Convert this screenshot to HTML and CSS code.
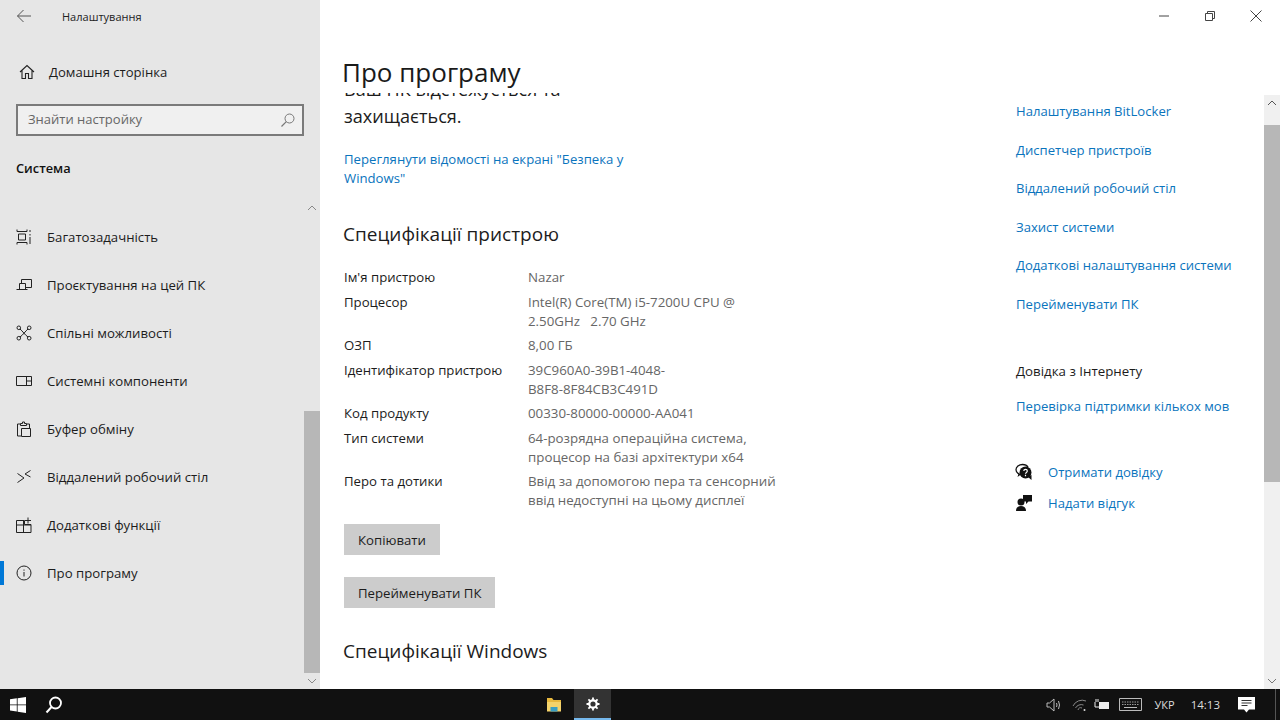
FILE: index.html
```html
<!DOCTYPE html>
<html lang="uk">
  <head>
    <meta charset="utf-8">
    <title>Про програму</title>
    <link rel="stylesheet" href="styles.css">
  </head>
  <body>
    <div class="window">
      <aside class="sidebar">
        <div class="app-bar">
          <svg class="back-icon" width="16" height="16" viewBox="0 0 16 16"><path d="M15 8H1.500M7.500 2L1.500 8l6 6" fill="none" stroke="#555" stroke-width="1"/></svg>
          <span class="app-title">Налаштування</span>
        </div>
        <div class="home-row">
          <svg class="nav-icon" width="16" height="16" viewBox="0 0 16 16"><path d="M1 8l7-6.500L15 8M3 6.500V14.500h3.500V9.500h3V14.500H13V6.500" fill="none" stroke="#222" stroke-width="1.100"/></svg>
          <span>Домашня сторінка</span>
        </div>
        <div class="search-box">
          <span>Знайти настройку</span>
          <svg width="16" height="16" viewBox="0 0 16 16"><circle cx="9.500" cy="6.500" r="4.500" fill="none" stroke="#777"/><path d="M6.300 9.700L1.500 14.500" stroke="#777" stroke-width="1.200"/></svg>
        </div>
        <div class="group-title">Система</div>
        <nav class="nav-list">
          <div class="nav-item">
            <svg class="nav-icon" width="16" height="16" viewBox="0 0 16 16"><path d="M1 .5v2h10v-2M1 15.500v-2h10v2M2.500 5h7v6h-7zM14 1v2M14 5v1.500M14 8v7" fill="none" stroke="#222"/></svg>
            <span>Багатозадачність</span>
          </div>
          <div class="nav-item">
            <svg class="nav-icon" width="16" height="16" viewBox="0 0 16 16"><path d="M5.500 6V2.500h10v8H9.500M3.500 6.500h6v6h-6zM.5 12.500h11" fill="none" stroke="#222"/></svg>
            <span>Проєктування на цей ПК</span>
          </div>
          <div class="nav-item">
            <svg class="nav-icon" width="16" height="16" viewBox="0 0 16 16"><path d="M4 4c2.500 2 5 6 8 8M12 4c-2.500 2-5 6-8 8" fill="none" stroke="#222"/><g fill="#e6e6e6" stroke="#222"><circle cx="2.800" cy="2.800" r="1.800"/><circle cx="13.200" cy="2.800" r="1.800"/><circle cx="2.800" cy="13.200" r="1.800"/><circle cx="13.200" cy="13.200" r="1.800"/></g></svg>
            <span>Спільні можливості</span>
          </div>
          <div class="nav-item">
            <svg class="nav-icon" width="16" height="16" viewBox="0 0 16 16"><path d="M.5 3.500h15v9H.5zM10.500 3.500v9M10.500 8h5" fill="none" stroke="#222"/></svg>
            <span>Системні компоненти</span>
          </div>
          <div class="nav-item">
            <svg class="nav-icon" width="16" height="16" viewBox="0 0 16 16"><path d="M4 3H1.500v12H5M11 3h2.500v4M4.500 4.500v-2h2V1h2v1.500h2v2zM5.500 7.500h9v8h-9z" fill="none" stroke="#222"/></svg>
            <span>Буфер обміну</span>
          </div>
          <div class="nav-item">
            <svg class="nav-icon" width="16" height="16" viewBox="0 0 16 16"><path d="M1.500 4.500L8 9l-6.500 4.500M14.500 1.500L9 5l5.500 3" fill="none" stroke="#222"/></svg>
            <span>Віддалений робочий стіл</span>
          </div>
          <div class="nav-item">
            <svg class="nav-icon" width="16" height="16" viewBox="0 0 16 16"><path d="M.5 3.500h8v4h6.500v8H.5zM.5 8h14.500M7.500 3.500v12M12 .5v6M9 3.500h6" fill="none" stroke="#222"/></svg>
            <span>Додаткові функції</span>
          </div>
          <div class="nav-item active">
            <svg class="nav-icon" width="16" height="16" viewBox="0 0 16 16"><circle cx="8" cy="8" r="7" fill="none" stroke="#222"/><path d="M8 7v4.500M8 4.500v1.200" stroke="#222"/></svg>
            <span>Про програму</span>
          </div>
        </nav>
        <div class="side-scroll">
          <svg class="arrow-up" width="10" height="6" viewBox="0 0 10 6"><path d="M1 5l4-4 4 4" fill="none" stroke="#888"/></svg>
          <div class="side-thumb"></div>
          <svg class="arrow-down" width="10" height="6" viewBox="0 0 10 6"><path d="M1 1l4 4 4-4" fill="none" stroke="#888"/></svg>
        </div>
      </aside>

      <main class="content">
        <div class="caption">
          <div class="caption-btn"><svg width="12" height="12" viewBox="0 0 12 12"><path d="M1 6h10" stroke="#444"/></svg></div>
          <div class="caption-btn"><svg width="12" height="12" viewBox="0 0 12 12"><path d="M1.500 3.500h7v7h-7zM3.500 3.500v-2h7v7h-2" fill="none" stroke="#444"/></svg></div>
          <div class="caption-btn"><svg width="12" height="12" viewBox="0 0 12 12"><path d="M.5.500l11 11M11.500.500l-11 11" stroke="#444"/></svg></div>
        </div>
        <h1 class="page-title">Про програму</h1>
        <div class="columns">
          <div class="main-col">
            <div class="main-inner">
              <p class="status-text">Ваш ПК відстежується та<br>захищається.</p>
              <a class="link security-link">Переглянути відомості на екрані "Безпека у Windows"</a>
              <h2 class="section-title">Специфікації пристрою</h2>
              <div class="spec-grid">
                <div>Ім'я пристрою</div><div class="spec-value">Nazar</div>
                <div>Процесор</div><div class="spec-value">Intel(R) Core(TM) i5-7200U CPU @<br>2.50GHz &nbsp; 2.70 GHz</div>
                <div>ОЗП</div><div class="spec-value">8,00 ГБ</div>
                <div>Ідентифікатор пристрою</div><div class="spec-value">39C960A0-39B1-4048-<br>B8F8-8F84CB3C491D</div>
                <div>Код продукту</div><div class="spec-value">00330-80000-00000-AA041</div>
                <div>Тип системи</div><div class="spec-value">64-розрядна операційна система,<br>процесор на базі архітектури x64</div>
                <div>Перо та дотики</div><div class="spec-value">Ввід за допомогою пера та сенсорний<br>ввід недоступні на цьому дисплеї</div>
              </div>
              <button class="btn copy-btn">Копіювати</button>
              <button class="btn rename-btn">Перейменувати ПК</button>
              <h2 class="section-title windows-title">Специфікації Windows</h2>
            </div>
          </div>
          <div class="side-col">
            <a class="link rel-link">Налаштування BitLocker</a>
            <a class="link rel-link">Диспетчер пристроїв</a>
            <a class="link rel-link">Віддалений робочий стіл</a>
            <a class="link rel-link">Захист системи</a>
            <a class="link rel-link">Додаткові налаштування системи</a>
            <a class="link rel-link">Перейменувати ПК</a>
            <div class="help-title">Довідка з Інтернету</div>
            <a class="link lang-link">Перевірка підтримки кількох мов</a>
            <div class="help-row first">
              <svg width="18" height="18" viewBox="0 0 18 18"><path d="M5 11.500C2.500 10.500 1 8.800 1 6.800 1 3.800 4 1.500 7.500 1.500c2.500 0 4.600 1 5.600 2.800" fill="none" stroke="#111" stroke-width="1.300"/><path d="M3.500 10.500L2.500 14l3.500-2.500" fill="#111"/><circle cx="10.500" cy="9.500" r="6" fill="#111"/><path d="M13 14l3.500 3V12z" fill="#111"/><path d="M8.800 8c0-2.300 3.500-2.300 3.500 0 0 1.500-1.800 1.300-1.800 2.800M10.500 11.800v1.400" fill="none" stroke="#fff" stroke-width="1.200"/></svg>
              <a class="link">Отримати довідку</a>
            </div>
            <div class="help-row">
              <svg width="18" height="18" viewBox="0 0 18 18"><circle cx="6" cy="8" r="3.500" fill="#111"/><path d="M1 17c0-3.500 2-5 5-5s5 1.500 5 5z" fill="#111"/><path d="M8 1h9v6.500h-3.500L11 10V7.500H8z" fill="#111"/></svg>
              <a class="link">Надати відгук</a>
            </div>
          </div>
        </div>
        <div class="main-scroll">
          <svg class="arrow-up" width="10" height="6" viewBox="0 0 10 6"><path d="M1 5l4-4 4 4" fill="none" stroke="#555"/></svg>
          <div class="main-thumb"></div>
          <svg class="arrow-down" width="10" height="6" viewBox="0 0 10 6"><path d="M1 1l4 4 4-4" fill="none" stroke="#777"/></svg>
        </div>
      </main>
    </div>

    <footer class="taskbar">
      <div class="task-left">
        <svg class="start-icon" width="16" height="16" viewBox="0 0 16 16"><path d="M0 2.300l6.800-1v6.200H0zM7.600 1.200L16 0v7.500H7.600zM0 8.300h6.800v6.300l-6.800-1zM7.600 8.300H16V16l-8.400-1.200z" fill="#fff"/></svg>
        <svg class="search-icon" width="18" height="18" viewBox="0 0 18 18"><circle cx="10.500" cy="7" r="5.500" fill="none" stroke="#fff" stroke-width="1.800"/><path d="M6.500 11L1.500 16.500" stroke="#fff" stroke-width="2"/></svg>
      </div>
      <div class="task-apps">
        <div class="task-app">
          <svg width="16" height="15" viewBox="0 0 16 15"><path d="M1 1h5l1.500 2H15v3H1z" fill="#e8b93f"/><path d="M1 5h14v9.500H1z" fill="#f4d36b"/><path d="M4.500 10h7v4.500h-7z" fill="#3a9fc4"/></svg>
        </div>
        <div class="task-app current">
          <svg width="14" height="14" viewBox="0 0 14 14"><circle cx="7" cy="7" r="3.700" fill="none" stroke="#fff" stroke-width="2.200"/><path d="M7 .5v2.500M7 11v2.500M.5 7H3M11 7h2.500M2.400 2.400l1.800 1.800M9.800 9.800l1.800 1.800M2.400 11.600l1.800-1.800M9.800 4.200l1.800-1.800" stroke="#fff" stroke-width="1.800"/></svg>
        </div>
      </div>
      <div class="tray">
        <svg class="tray-speaker" width="16" height="14" viewBox="0 0 16 14"><path d="M1 5h2.500L8 1v12L3.500 9H1zM10.500 5q1 2 0 4M12.500 3q2 4 0 8" fill="none" stroke="#bbb"/></svg>
        <svg class="tray-wifi" width="15" height="14" viewBox="0 0 15 14"><path d="M1 8a10 10 0 0 1 13-5M3.500 10a6.500 6.500 0 0 1 8-3M6 12a3 3 0 0 1 4-2" fill="none" stroke="#888"/><circle cx="12.500" cy="12" r="1" fill="#ddd"/></svg>
        <svg class="tray-battery" width="16" height="12" viewBox="0 0 16 12"><path d="M5 3h10v7H5z" fill="#eee"/><path d="M1 3v5h4M2 0v3M4 0v3" fill="none" stroke="#eee"/></svg>
        <svg class="tray-keyboard" width="23" height="13" viewBox="0 0 23 13"><path d="M.5.500h22v12H.5z" fill="none" stroke="#bbb"/><path d="M3 4h17M3 6.500h17" stroke="#999" stroke-dasharray="1.500 1"/><path d="M5 9.500h13" stroke="#bbb"/></svg>
        <span class="tray-lang">УКР</span>
        <span class="tray-time">14:13</span>
        <svg class="tray-note" width="17" height="16" viewBox="0 0 17 16"><path d="M0 0h17v12.500h-6L8.500 15.500 6 12.500H0z" fill="#fff"/><path d="M3.500 3.500h10M3.500 6h10M3.500 8.500h6" stroke="#333"/></svg>
        <div class="show-desktop"></div>
      </div>
    </footer>
  </body>
</html>
```

FILE: styles.css
```css
html, body { margin: 0; padding: 0; height: 100%; overflow: hidden }
body {
  display: flex;
  flex-direction: column;
  width: 1280px;
  height: 720px;
  font-family: "Open Sans", sans-serif;
  font-size: 13.2px;
  color: #1c1c1c;
  background: #fff;
}

.window { display: flex; height: 689px }

/* sidebar */
.sidebar {
  position: relative;
  box-sizing: border-box;
  width: 320px;
  padding-left: 16px;
  background: #e6e6e6;
}

.app-bar { display: flex; align-items: center; height: 32px }
.app-title { margin-left: 30px; font-size: 11px; color: #222 }

.home-row { display: flex; align-items: center; height: 24px; margin-top: 28px; font-size: 13.1px }
.nav-icon { flex: none; margin-right: 15px }
.home-row .nav-icon { margin-right: 14px; margin-left: 3px }

.search-box {
  box-sizing: border-box;
  display: flex;
  align-items: center;
  justify-content: space-between;
  width: 288px;
  height: 32px;
  margin-top: 20px;
  padding: 0 6px 0 10px;
  background: #f0f0f0;
  border: 2px solid #7a7a7a;
  font-size: 13px;
  color: #666;
}
.search-box span { position: relative; top: -1px }

.group-title { margin-top: 22px; line-height: 20px; font-size: 12.800px; font-weight: 600; color: #111 }

.nav-list { margin-top: 35px; margin-left: -16px }
.nav-item {
  position: relative;
  display: flex;
  align-items: center;
  height: 48px;
  padding-left: 16px;
}
.nav-item.active:before {
  content: "";
  position: absolute;
  left: 0;
  top: 12px;
  width: 4px;
  height: 24px;
  background: #0078d7;
}

.side-scroll {
  position: absolute;
  right: 0;
  top: 200px;
  bottom: 0;
  width: 16px;
}
.side-thumb { position: absolute; left: 0; top: 211px; width: 16px; height: 262px; background: #b7b7b7 }
.side-scroll .arrow-up { position: absolute; left: 3px; top: 5px }
.side-scroll .arrow-down { position: absolute; left: 3px; bottom: 5px }

/* main pane */
.content { position: relative; flex: 1; display: flex; flex-direction: column; min-width: 0 }

.caption { display: flex; justify-content: flex-end; height: 32px; padding-right: 1px }
.caption-btn { display: flex; align-items: center; justify-content: center; width: 46px; height: 32px }

.page-title {
  position: relative;
  z-index: 1;
  height: 61px;
  margin: 0;
  padding-left: 22px;
  background: #fff;
  font-size: 26px;
  font-weight: 400;
  line-height: 80px;
  color: #1a1a1a;
  overflow: hidden;
}

.columns { display: flex; flex: 1; min-height: 0 }

.main-col { width: 696px; overflow: hidden }
.main-inner { margin-top: -17px; padding-left: 24px }

.status-text { margin: 0; font-size: 18.100px; line-height: 27px }
.link { color: #0a74bd; font-size: 13.100px }
.security-link { display: block; width: 310px; margin-top: 20px; line-height: 19px; font-size: 13.170px }

.section-title { margin: 32px 0 0 -1px; font-size: 19px; font-weight: 400; line-height: 28px }

.spec-grid {
  display: grid;
  grid-template-columns: 184px 260px;
  row-gap: 5.500px;
  margin-top: 20px;
  line-height: 19px;
}
.spec-value { color: #666; font-size: 13.300px }

.btn {
  display: block;
  height: 31px;
  padding: 0 14px;
  border: 0;
  background: #ccc;
  font: inherit;
  color: #1c1c1c;
}
.copy-btn { margin-top: 14px }
.rename-btn { margin-top: 22px }
.windows-title { margin-top: 29px }

.side-col { display: flex; flex-direction: column; padding-top: 8px; font-size: 13.300px }
.rel-link { height: 38.600px; line-height: 20px }
.help-title { margin-top: 28px; line-height: 20px }
.lang-link { margin-top: 15px; line-height: 20px }
.help-row { display: flex; align-items: center; height: 20px; margin-top: 11px }
.help-row.first { margin-top: 46px }
.help-row svg { margin-right: 15px; margin-left: -1px }

.main-scroll {
  position: absolute;
  right: 0;
  top: 95px;
  bottom: 0;
  width: 16px;
  background: #f0f0f0;
}
.main-thumb { position: absolute; left: 0; top: 30px; width: 16px; height: 357px; background: #b7b7b7 }
.main-scroll .arrow-up { position: absolute; left: 3px; top: 5px }
.main-scroll .arrow-down { position: absolute; left: 3px; bottom: 5px }

/* taskbar */
.taskbar {
  display: flex;
  align-items: center;
  height: 31px;
  background: #111;
  color: #ddd;
  font-size: 11.500px;
}
.task-left { display: flex; align-items: center; width: 536px }
.start-icon { margin-left: 10px }
.search-icon { margin-left: 19px }
.task-apps { display: flex; height: 100% }
.task-app { display: flex; align-items: center; justify-content: center; width: 37px }
.task-app:first-child svg { margin-left: -2px }
.task-app.current { margin-left: 1px; background: #333; border-bottom: 2px solid #76b9ed; box-sizing: border-box }
.tray { display: flex; align-items: center; margin-left: auto; height: 100% }
.tray-speaker { margin-right: 10px }
.tray-wifi { margin-right: 7px }
.tray-battery { margin-right: 9px }
.tray-keyboard { margin-right: 13px }
.tray-lang { margin-right: 16px; font-size: 11px }
.tray-time { margin-right: 18px }
.tray-note { margin-right: 20px }
.show-desktop { width: 1px; height: 100%; background: #555; margin-right: 4px }
```
